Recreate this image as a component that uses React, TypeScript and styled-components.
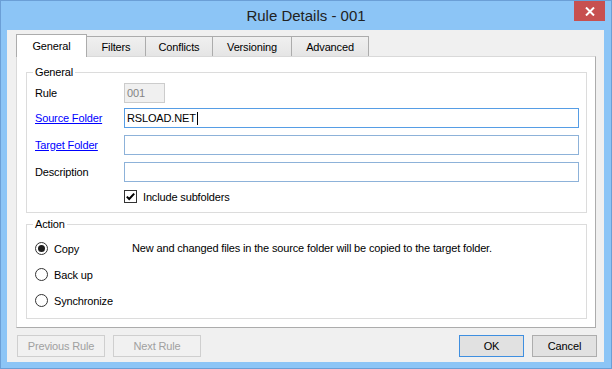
import React from "react";
import styled, { createGlobalStyle } from "styled-components";

const Global = createGlobalStyle`
  html, body { margin: 0; padding: 0; width: 612px; height: 369px; overflow: hidden; background: #8cc5f6; }
  body { font-family: "Liberation Sans", Arial, sans-serif; font-size: 11px; color: #000; letter-spacing: -0.15px; }
  * { box-sizing: border-box; }
`;

const Window = styled.div`
  width: 612px;
  height: 369px;
  border: 1px solid #6b9fd6;
  background: #8cc5f6;
  display: flex;
  flex-direction: column;
`;

const TitleBar = styled.div`
  flex: none;
  height: 29px;
  display: grid;
  grid-template-columns: 1fr auto 1fr;
  align-items: start;
`;

const Title = styled.div`
  grid-column: 2;
  font-size: 15px;
  line-height: 29px;
  letter-spacing: 0;
  color: #222;
`;

const CloseButton = styled.div`
  grid-column: 3;
  justify-self: end;
  margin-right: 6px;
  width: 31px;
  height: 20px;
  background: #c75050;
  display: flex;
  align-items: center;
  justify-content: center;
`;

const Client = styled.div`
  flex: 1;
  margin: 0 7px 6px 6px;
  background: #f0f0f0;
  padding: 4px 8px 5px 9px;
  display: flex;
  flex-direction: column;
`;

const TabStrip = styled.div`
  flex: none;
  height: 22px;
  display: flex;
  align-items: flex-end;
`;

const Tab = styled.div<{ $w: number; $active?: boolean }>`
  width: ${(p) => p.$w}px;
  height: ${(p) => (p.$active ? 23 : 20)}px;
  margin-left: -1px;
  margin-bottom: ${(p) => (p.$active ? -1 : 0)}px;
  position: relative;
  z-index: ${(p) => (p.$active ? 1 : 0)};
  border: 1px solid #acacac;
  border-bottom: none;
  background: ${(p) => (p.$active ? "#ffffff" : "linear-gradient(#f0f0f0, #e5e5e5)")};
  display: flex;
  align-items: center;
  justify-content: center;
  padding-top: ${(p) => (p.$active ? 0 : 1)}px;
  &:first-child { margin-left: 0; }
`;

const Panel = styled.div`
  flex: none;
  height: 272px;
  background: #ffffff;
  border: 1px solid #acacac;
  border-top-color: #d9d9d9;
  border-left-color: #d9d9d9;
  padding: 15px 8px 8px 9px;
  display: flex;
  flex-direction: column;
  gap: 11px;
`;

const Group = styled.div<{ $pad: string }>`
  position: relative;
  border: 1px solid #dcdcdc;
  padding: ${(p) => p.$pad};
`;

const Caption = styled.span`
  position: absolute;
  top: -7px;
  left: 6px;
  padding: 0 2px;
  background: #ffffff;
  line-height: 13px;
`;

const FieldRow = styled.div<{ $gap: number }>`
  display: flex;
  align-items: center;
  height: 20px;
  margin-top: ${(p) => p.$gap}px;
`;

const Label = styled.div`
  width: 89px;
  flex: none;
  line-height: 13px;
`;

const LinkLabel = styled(Label)`
  color: #0000ff;
  text-decoration: underline;
`;

type BoxState = "disabled" | "focus" | "normal";

const TextBox = styled.div<{ $state: BoxState; $w?: number }>`
  height: 20px;
  ${(p) => (p.$w ? `width: ${p.$w}px; flex: none;` : "flex: 1;")}
  border: 1px solid
    ${(p) => (p.$state === "disabled" ? "#cccccc" : p.$state === "focus" ? "#569de5" : "#8db2d9")};
  background: ${(p) => (p.$state === "disabled" ? "#f0f0f0" : "#ffffff")};
  color: ${(p) => (p.$state === "disabled" ? "#838383" : "#000000")};
  padding: 0 2px;
  display: flex;
  align-items: center;
  white-space: nowrap;
`;

const Caret = styled.span`
  display: inline-block;
  width: 1px;
  height: 13px;
  background: #000;
  margin-left: 1px;
`;

const CheckRow = styled.div`
  display: flex;
  align-items: center;
  gap: 6px;
  height: 13px;
  margin-top: 8px;
  padding-left: 89px;
`;

const CheckBox = styled.div`
  width: 13px;
  height: 13px;
  border: 1px solid #333333;
  background: #ffffff;
  display: flex;
  align-items: center;
  justify-content: center;
`;

const ActionGrid = styled.div`
  display: grid;
  grid-template-columns: 97px 1fr;
  grid-auto-rows: 13px;
  row-gap: 13px;
  align-items: center;
`;

const RadioItem = styled.div`
  grid-column: 1;
  display: flex;
  align-items: center;
  gap: 6px;
  height: 13px;
  white-space: nowrap;
`;

const Radio = styled.div<{ $checked?: boolean }>`
  width: 13px;
  height: 13px;
  flex: none;
  border: 1px solid #333333;
  border-radius: 50%;
  background: #ffffff;
  display: flex;
  align-items: center;
  justify-content: center;
  &::after {
    content: "";
    display: ${(p) => (p.$checked ? "block" : "none")};
    width: 7px;
    height: 7px;
    border-radius: 50%;
    background: #1e1e1e;
  }
`;

const ActionNote = styled.div`
  grid-column: 2;
  grid-row: 1;
  white-space: nowrap;
  line-height: 13px;
`;

const ButtonBar = styled.div`
  flex: none;
  display: flex;
  gap: 8px;
  height: 22px;
  margin-top: 7px;
  padding-left: 1px;
  margin-right: -1px;
`;

type BtnKind = "disabled" | "default" | "normal";

const Button = styled.div<{ $w: number; $kind: BtnKind; $push?: boolean }>`
  width: ${(p) => p.$w}px;
  height: 22px;
  ${(p) => (p.$push ? "margin-left: auto;" : "")}
  border: 1px solid
    ${(p) => (p.$kind === "disabled" ? "#cfcfcf" : p.$kind === "default" ? "#3f8fe0" : "#adadad")};
  background: ${(p) => (p.$kind === "disabled" ? "#f1f1f1" : "#e1e1e1")};
  color: ${(p) => (p.$kind === "disabled" ? "#a0a0a0" : "#000000")};
  display: flex;
  align-items: center;
  justify-content: center;
`;

const tabs = [
  { label: "General", w: 71, active: true },
  { label: "Filters", w: 60 },
  { label: "Conflicts", w: 68 },
  { label: "Versioning", w: 80 },
  { label: "Advanced", w: 78 },
];

export default function App() {
  return (
    <>
      <Global />
      <Window>
        <TitleBar>
          <Title>Rule Details - 001</Title>
          <CloseButton>
            <svg width="10" height="9" viewBox="0 0 10 9">
              <path d="M1 0.5 L9 8.5 M9 0.5 L1 8.5" stroke="#ffffff" strokeWidth="2" fill="none" />
            </svg>
          </CloseButton>
        </TitleBar>
        <Client>
          <TabStrip>
            {tabs.map((t) => (
              <Tab key={t.label} $w={t.w} $active={t.active}>
                {t.label}
              </Tab>
            ))}
          </TabStrip>
          <Panel>
            <Group $pad="10px 7px 9px 8px">
              <Caption>General</Caption>
              <FieldRow $gap={0}>
                <Label>Rule</Label>
                <TextBox $state="disabled" $w={41}>001</TextBox>
              </FieldRow>
              <FieldRow $gap={5}>
                <LinkLabel>Source Folder</LinkLabel>
                <TextBox $state="focus">
                  RSLOAD.NET
                  <Caret />
                </TextBox>
              </FieldRow>
              <FieldRow $gap={7}>
                <LinkLabel>Target Folder</LinkLabel>
                <TextBox $state="normal" />
              </FieldRow>
              <FieldRow $gap={7}>
                <Label>Description</Label>
                <TextBox $state="normal" />
              </FieldRow>
              <CheckRow>
                <CheckBox>
                  <svg width="11" height="11" viewBox="0 0 11 11">
                    <path d="M1.8 5.6 L4.2 8 L9.2 2.6" stroke="#000000" strokeWidth="2" fill="none" />
                  </svg>
                </CheckBox>
                Include subfolders
              </CheckRow>
            </Group>
            <Group $pad="17px 8px 11px 8px">
              <Caption>Action</Caption>
              <ActionGrid>
                <RadioItem>
                  <Radio $checked />
                  Copy
                </RadioItem>
                <ActionNote>
                  New and changed files in the source folder will be copied to the target folder.
                </ActionNote>
                <RadioItem>
                  <Radio />
                  Back up
                </RadioItem>
                <RadioItem>
                  <Radio />
                  Synchronize
                </RadioItem>
              </ActionGrid>
            </Group>
          </Panel>
          <ButtonBar>
            <Button $w={88} $kind="disabled">Previous Rule</Button>
            <Button $w={88} $kind="disabled">Next Rule</Button>
            <Button $w={65} $kind="default" $push>OK</Button>
            <Button $w={65} $kind="normal">Cancel</Button>
          </ButtonBar>
        </Client>
      </Window>
    </>
  );
}
